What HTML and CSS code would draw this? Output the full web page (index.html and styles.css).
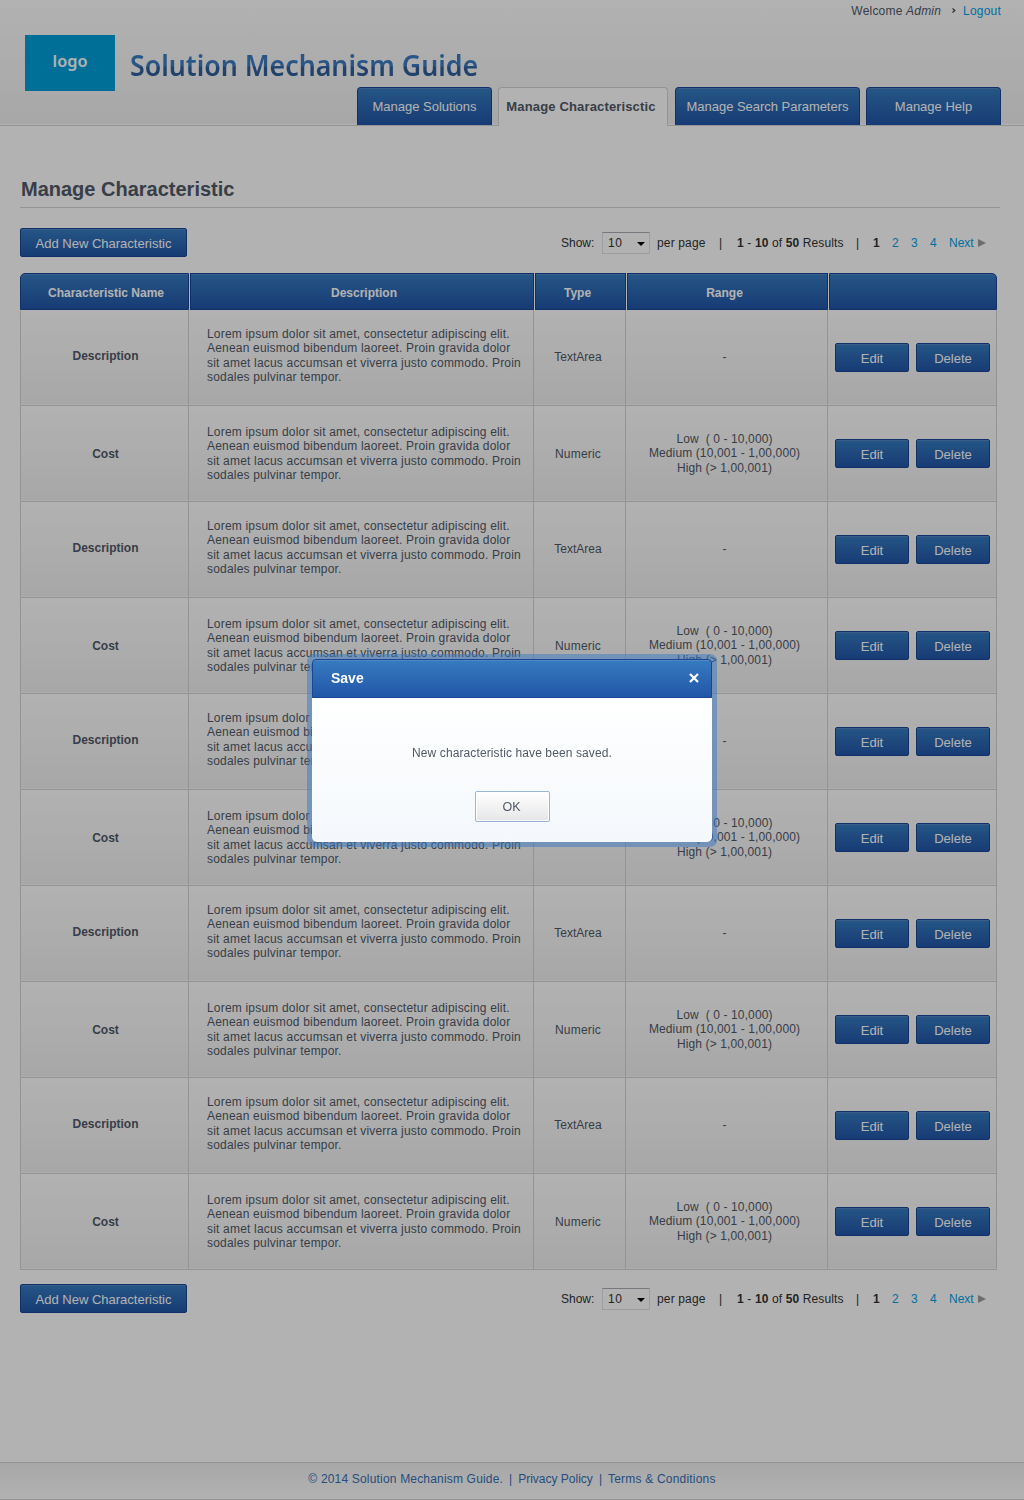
FILE: index.html
```html
<!DOCTYPE html>
<html lang="en">
<head>
<meta charset="utf-8">
<title>Solution Mechanism Guide</title>
<link rel="stylesheet" href="styles.css">
</head>
<body>
<div class="page">
<header class="header">
  <div class="user"><span class="welcome">Welcome <em>Admin</em></span><svg class="chev" width="4" height="5" viewBox="0 0 4 5"><path d="M0.5 0.5L2.8 2.5L0.5 4.5" fill="none" stroke="#444a55" stroke-width="1.3"/></svg><a class="logout">Logout</a></div>
  <div class="brand"><div class="logo">logo</div><div class="title">Solution Mechanism Guide</div></div>
  <nav class="tabs">
    <a class="tab">Manage Solutions</a>
    <a class="tab active">Manage Characterisctic</a>
    <a class="tab wide">Manage Search Parameters</a>
    <a class="tab">Manage Help</a>
  </nav>
</header>
<main class="main">
  <h1>Manage Characteristic</h1>
  <div class="bar">
    <a class="btn add">Add New Characteristic</a>
    <div class="pager"><span class="show">Show:</span><span class="select">10<svg width="8" height="4" viewBox="0 0 8 4"><path d="M0 0H8L4 4Z" fill="#000"/></svg></span><span class="per">per page</span><span class="sep">|</span><span class="results"><b>1</b> - <b>10</b> of <b>50</b> Results</span><span class="sep2">|</span><b class="num">1</b><a class="num">2</a><a class="num">3</a><a class="num">4</a><a class="next">Next</a><svg width="8" height="8" viewBox="0 0 8 8"><path d="M0 0L8 4L0 8Z" fill="#9c9c9c"/></svg></div>
  </div>
  <div class="table">
    <div class="thead"><div>Characteristic Name</div><div class="h-desc">Description</div><div class="h-type">Type</div><div class="h-range">Range</div><div></div></div>
    <div class="row"><div class="name">Description</div><div class="desc">Lorem ipsum dolor sit amet, consectetur adipiscing elit.<br>Aenean euismod bibendum laoreet. Proin gravida dolor<br>sit amet lacus accumsan et viverra justo commodo. Proin<br>sodales pulvinar tempor.</div><div class="type">TextArea</div><div class="range">-</div><div class="act"><a class="btn">Edit</a><a class="btn">Delete</a></div></div>
    <div class="row cost"><div class="name">Cost</div><div class="desc">Lorem ipsum dolor sit amet, consectetur adipiscing elit.<br>Aenean euismod bibendum laoreet. Proin gravida dolor<br>sit amet lacus accumsan et viverra justo commodo. Proin<br>sodales pulvinar tempor.</div><div class="type">Numeric</div><div class="range">Low&nbsp; ( 0 - 10,000)<br>Medium (10,001 - 1,00,000)<br>High (&gt; 1,00,001)</div><div class="act"><a class="btn">Edit</a><a class="btn">Delete</a></div></div>
    <div class="row"><div class="name">Description</div><div class="desc">Lorem ipsum dolor sit amet, consectetur adipiscing elit.<br>Aenean euismod bibendum laoreet. Proin gravida dolor<br>sit amet lacus accumsan et viverra justo commodo. Proin<br>sodales pulvinar tempor.</div><div class="type">TextArea</div><div class="range">-</div><div class="act"><a class="btn">Edit</a><a class="btn">Delete</a></div></div>
    <div class="row cost"><div class="name">Cost</div><div class="desc">Lorem ipsum dolor sit amet, consectetur adipiscing elit.<br>Aenean euismod bibendum laoreet. Proin gravida dolor<br>sit amet lacus accumsan et viverra justo commodo. Proin<br>sodales pulvinar tempor.</div><div class="type">Numeric</div><div class="range">Low&nbsp; ( 0 - 10,000)<br>Medium (10,001 - 1,00,000)<br>High (&gt; 1,00,001)</div><div class="act"><a class="btn">Edit</a><a class="btn">Delete</a></div></div>
    <div class="row"><div class="name">Description</div><div class="desc">Lorem ipsum dolor sit amet, consectetur adipiscing elit.<br>Aenean euismod bibendum laoreet. Proin gravida dolor<br>sit amet lacus accumsan et viverra justo commodo. Proin<br>sodales pulvinar tempor.</div><div class="type">TextArea</div><div class="range">-</div><div class="act"><a class="btn">Edit</a><a class="btn">Delete</a></div></div>
    <div class="row cost"><div class="name">Cost</div><div class="desc">Lorem ipsum dolor sit amet, consectetur adipiscing elit.<br>Aenean euismod bibendum laoreet. Proin gravida dolor<br>sit amet lacus accumsan et viverra justo commodo. Proin<br>sodales pulvinar tempor.</div><div class="type">Numeric</div><div class="range">Low&nbsp; ( 0 - 10,000)<br>Medium (10,001 - 1,00,000)<br>High (&gt; 1,00,001)</div><div class="act"><a class="btn">Edit</a><a class="btn">Delete</a></div></div>
    <div class="row"><div class="name">Description</div><div class="desc">Lorem ipsum dolor sit amet, consectetur adipiscing elit.<br>Aenean euismod bibendum laoreet. Proin gravida dolor<br>sit amet lacus accumsan et viverra justo commodo. Proin<br>sodales pulvinar tempor.</div><div class="type">TextArea</div><div class="range">-</div><div class="act"><a class="btn">Edit</a><a class="btn">Delete</a></div></div>
    <div class="row cost"><div class="name">Cost</div><div class="desc">Lorem ipsum dolor sit amet, consectetur adipiscing elit.<br>Aenean euismod bibendum laoreet. Proin gravida dolor<br>sit amet lacus accumsan et viverra justo commodo. Proin<br>sodales pulvinar tempor.</div><div class="type">Numeric</div><div class="range">Low&nbsp; ( 0 - 10,000)<br>Medium (10,001 - 1,00,000)<br>High (&gt; 1,00,001)</div><div class="act"><a class="btn">Edit</a><a class="btn">Delete</a></div></div>
    <div class="row"><div class="name">Description</div><div class="desc">Lorem ipsum dolor sit amet, consectetur adipiscing elit.<br>Aenean euismod bibendum laoreet. Proin gravida dolor<br>sit amet lacus accumsan et viverra justo commodo. Proin<br>sodales pulvinar tempor.</div><div class="type">TextArea</div><div class="range">-</div><div class="act"><a class="btn">Edit</a><a class="btn">Delete</a></div></div>
    <div class="row cost"><div class="name">Cost</div><div class="desc">Lorem ipsum dolor sit amet, consectetur adipiscing elit.<br>Aenean euismod bibendum laoreet. Proin gravida dolor<br>sit amet lacus accumsan et viverra justo commodo. Proin<br>sodales pulvinar tempor.</div><div class="type">Numeric</div><div class="range">Low&nbsp; ( 0 - 10,000)<br>Medium (10,001 - 1,00,000)<br>High (&gt; 1,00,001)</div><div class="act"><a class="btn">Edit</a><a class="btn">Delete</a></div></div>
  </div>
  <div class="bar bottom">
    <a class="btn add">Add New Characteristic</a>
    <div class="pager"><span class="show">Show:</span><span class="select">10<svg width="8" height="4" viewBox="0 0 8 4"><path d="M0 0H8L4 4Z" fill="#000"/></svg></span><span class="per">per page</span><span class="sep">|</span><span class="results"><b>1</b> - <b>10</b> of <b>50</b> Results</span><span class="sep2">|</span><b class="num">1</b><a class="num">2</a><a class="num">3</a><a class="num">4</a><a class="next">Next</a><svg width="8" height="8" viewBox="0 0 8 8"><path d="M0 0L8 4L0 8Z" fill="#9c9c9c"/></svg></div>
  </div>
</main>
<footer class="footer"><span class="copy">© 2014 Solution Mechanism Guide.</span><span>|</span><a>Privacy Policy</a><span>|</span><a>Terms &amp; Conditions</a></footer>
</div>
<div class="overlay">
  <div class="modal">
    <div class="modal-head"><span>Save</span><svg width="10" height="10" viewBox="0 0 10 10"><path d="M1 1L9 9M9 1L1 9" stroke="#fff" stroke-width="2.2"/></svg></div>
    <div class="modal-body"><p>New characteristic have been saved.</p><a class="ok">OK</a></div>
  </div>
</div>
</body>
</html>
```
FILE: styles.css
```css
* { box-sizing: border-box; }
body { margin: 0; font-family: "Liberation Sans", Arial, sans-serif; font-size: 12px; color: #515967; background: #fff; }
.page { height: 1500px; display: flex; flex-direction: column; }

.header { height: 126px; display: flex; flex-direction: column; background: linear-gradient(#fff, #f0f0f0); border-bottom: 1px solid #d4d4d4; box-shadow: inset 0 -1px #fff; }
.user { height: 35px; padding: 4px 23px 0 0; display: flex; justify-content: flex-end; align-items: flex-start; line-height: 14px; letter-spacing: 0.2px; }
.chev { margin: 4px 7px 0 11px; }
.logout, .pager a { color: #00a0e4; }
.brand { display: flex; height: 52px; padding-left: 25px; }
.logo { width: 90px; height: 56px; flex: none; background: #009fd9; color: #fff; font: 600 16.3px/52px "Noto Sans", sans-serif; text-align: center; }
.title { margin-left: 15px; height: 60px; font: 600 28.5px/60px "Noto Sans", sans-serif; white-space: nowrap; transform-origin: 0 50%; transform: scaleX(0.938); color: transparent; background: linear-gradient(#3b7bc2 52%, #305f9b 53%); -webkit-background-clip: text; background-clip: text; }
.tabs { display: flex; justify-content: flex-end; align-items: flex-start; padding-right: 23px; height: 38px; }
.tab { width: 135px; height: 38px; margin-left: 6px; border: 1px solid #184594; border-bottom: 0; border-radius: 4px 4px 0 0; background: linear-gradient(#367bc0, #2256a8); box-shadow: inset 0 1px #5088c4; color: #fff; font-size: 13px; line-height: 37px; text-align: center; white-space: nowrap; }
.tab.active { width: 170px; height: 39px; background: #fff; border-color: #d4d4d4; box-shadow: none; color: #515967; font-weight: bold; padding-right: 4px; letter-spacing: 0.15px; }
.tab.wide { width: 185px; margin-left: 7px; letter-spacing: -0.03px; }

.main { padding: 52px 24px 0 20px; flex: 1; }
h1 { margin: 0; height: 30px; width: 980px; border-bottom: 1px solid #d4d4d4; padding-left: 1px; font-size: 20px; line-height: 23px; }
.bar { display: flex; justify-content: space-between; height: 29px; margin: 20px 0 16px; width: 966px; }
.bar.bottom { margin-top: 14px; }
.btn { display: block; width: 74px; height: 29px; border: 1px solid #184594; border-radius: 2px; background: linear-gradient(#367bc0, #2256a8); box-shadow: inset 0 1px #5088c4; color: #fff; font-size: 13px; line-height: 29px; text-align: center; white-space: nowrap; }
.add { width: 167px; }
.pager { display: flex; align-items: center; width: 425px; color: #333; line-height: 14px; white-space: nowrap; }
.show { width: 41px; }
.select { width: 48px; height: 22px; display: flex; align-items: center; justify-content: space-between; padding: 0 4px 0 5px; border: 1px solid #dfe2ea; border-top-color: #abadb3; letter-spacing: 0.5px; margin-top: 1px; }
.select svg { margin-top: 2px; }
.per { margin-left: 7px; width: 62px; letter-spacing: 0.15px; }
.sep { width: 18px; }
.results { width: 119px; letter-spacing: 0.13px; }
.sep2 { width: 17px; }
.num { width: 19px; }
.next { width: 29px; }

.table { width: 977px; }
.thead { display: grid; grid-template-columns: 169px 344px 91px 201px 168px; grid-template-rows: 37px; gap: 1px; height: 37px; background: linear-gradient(90deg, transparent 20px, #fff 20px, #fff 950px, transparent 950px); }
.thead div { height: 37px; border: 1px solid #184594; background: linear-gradient(#367bc0, #2256a8); box-shadow: inset 0 1px #5088c4; color: #fff; font-weight: bold; line-height: 38px; text-align: center; }
.thead div:first-child { border-top-left-radius: 5px; padding-left: 3px; }
.thead div:last-child { border-top-right-radius: 5px; }
.thead .h-desc { padding-left: 4px; }
.thead .h-type, .thead .h-range { padding-right: 6px; }
.row { display: grid; grid-template-columns: 168px 345px 92px 202px 169px; height: 96px; border-left: 1px solid #d4d4d4; border-bottom: 1px solid #d4d4d4; background: linear-gradient(#fff, #f0f0f0); box-shadow: inset 0 -1px #fafafa; line-height: 14.4px; }
.row > div { border-right: 1px solid #d4d4d4; text-align: center; padding-top: 40px; white-space: nowrap; }
.row > .name { font-weight: bold; padding-top: 39px; padding-left: 2px; }
.row > .desc { text-align: left; padding: 17px 0 0 18px; letter-spacing: 0.19px; }
.row > .type { padding-right: 3px; }
.row > .range { padding-right: 4px; letter-spacing: 0.12px; }
.cost > .name { padding-top: 41px; }
.cost > .desc { padding-top: 19px; }
.cost > .type { padding-top: 41px; letter-spacing: 0.2px; }
.cost > .range { padding-top: 26px; }
.row > .act { display: flex; gap: 7px; padding: 33px 0 0 7px; }

.footer { height: 38px; border-top: 1px solid #d4d4d4; border-bottom: 1px solid #d4d4d4; background: linear-gradient(#f0f0f0, #fff); display: flex; justify-content: center; gap: 6px; color: #3670b5; line-height: 33px; }
.copy { letter-spacing: 0.18px; }
.footer a:last-child { letter-spacing: 0.2px; }

.overlay { position: fixed; inset: 0; background: rgba(0,0,0,0.3); display: flex; justify-content: center; align-items: center; }
.modal { width: 410px; height: 193px; border-radius: 7px; background: rgba(55,120,195,0.5); padding: 5px; margin-top: 1px; }
.modal-head { height: 39px; display: flex; justify-content: space-between; align-items: center; padding: 0 12px 1px 18px; border: 1px solid #184594; border-radius: 4px 4px 0 0; background: linear-gradient(#367bc0, #2256a8); box-shadow: inset 0 1px #5088c4; color: #fff; font-weight: bold; font-size: 14px; }
.modal-body { height: 144px; background: linear-gradient(#fff, #f4f8fc); border-radius: 0 0 5px 5px; display: flex; flex-direction: column; align-items: center; padding-top: 48px; }
.modal-body p { margin: 0; line-height: 14px; letter-spacing: 0.11px; }
.ok { margin: 31px 0 0 1px; width: 75px; height: 31px; border: 1px solid #9ab5d8; border-radius: 2px; background: linear-gradient(#fff, #e5e6e7); box-shadow: inset 0 0 0 1px #fff; text-align: center; line-height: 30px; font-size: 12.5px; padding-right: 2px; }
```
